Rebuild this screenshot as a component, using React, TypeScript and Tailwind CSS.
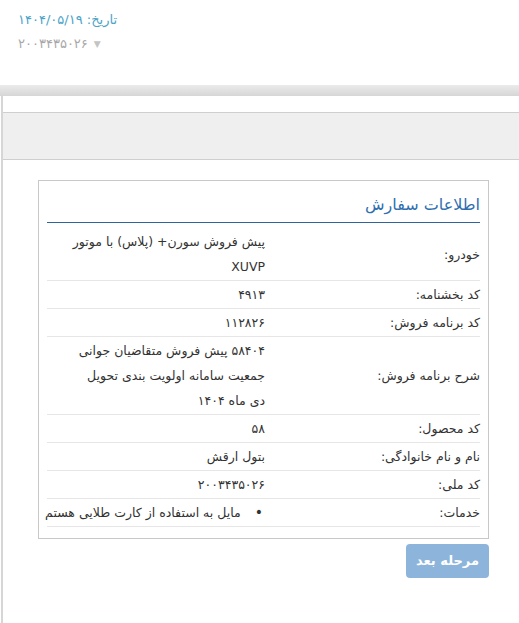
import React from 'react';

const rows: { label: string; lines: string[] }[] = [
  { label: 'خودرو:', lines: ['پیش فروش سورن+ (پلاس) با موتور', 'XUVP'] },
  { label: 'کد بخشنامه:', lines: ['۴۹۱۳'] },
  { label: 'کد برنامه فروش:', lines: ['۱۱۲۸۲۶'] },
  { label: 'شرح برنامه فروش:', lines: ['۵۸۴۰۴ پیش فروش متقاضیان جوانی', 'جمعیت سامانه اولویت بندی تحویل', 'دی ماه ۱۴۰۴'] },
  { label: 'کد محصول:', lines: ['۵۸'] },
  { label: 'نام و نام خانوادگی:', lines: ['بتول ارقش'] },
  { label: 'کد ملی:', lines: ['۲۰۰۳۴۳۵۰۲۶'] },
];

export default function App() {
  return (
    <div className="flex min-h-[623px] flex-col bg-white font-['DejaVu_Sans',sans-serif] text-[#333]">
      {/* header info */}
      <div className="h-[85px] shrink-0 px-[18px] pt-[8px]">
        <div dir="rtl" className="w-fit text-[13px] leading-[24px] text-[#4ba3c7]">
          تاریخ: ۱۴۰۴/۰۵/۱۹
        </div>
        <div dir="rtl" className="flex w-fit items-center gap-[6px] text-[13px] leading-[24px] text-[#a8a8a8]">
          <span className="text-[9px] text-[#c4c4c4]">▼</span>
          <span>۲۰۰۳۴۳۵۰۲۶</span>
        </div>
      </div>

      <div className="h-[11px] shrink-0 bg-gradient-to-b from-[#ebebeb] to-[#d6d6d6]" />

      <div className="ml-[1px] flex-1 border-l-[2px] border-[#d6d6d6]">
        <div className="h-[16px]" />
        <div className="h-[48px] border-y border-[#cfcfcf] bg-[#efefef]" />

        <div className="pl-[35px] pr-[30px] pt-[20px]">
          <div dir="rtl" className="border border-[#c8c8c8] px-[8px] pb-[11px] pt-[13px]">
            <div className="border-b border-[#2f639b] pb-[6px] text-[16px] leading-[22px] text-[#2f6fb0]">
              اطلاعات سفارش
            </div>
            <div className="mt-[5px]">
              {rows.map((r) => (
                <div key={r.label} className="flex items-center border-b border-[#e6e6e6] py-[1px] text-[12.5px]">
                  <div className="w-[215px] shrink-0 leading-[25px]">{r.label}</div>
                  <div className="flex-1 pl-[4px] leading-[25px]">
                    {r.lines.map((l) => (
                      <div key={l}>{l}</div>
                    ))}
                  </div>
                </div>
              ))}
              <div className="flex items-center border-b border-[#e6e6e6] py-[1px] text-[12.5px]">
                <div className="w-[215px] shrink-0 leading-[25px]">خدمات:</div>
                <div className="flex flex-1 items-center leading-[25px]">
                  <span className="pr-[2px] pl-[14px] text-[14px]">•</span>
                  <span className="whitespace-nowrap">مایل به استفاده از کارت طلایی هستم</span>
                </div>
              </div>
            </div>
          </div>

          <div dir="rtl" className="pt-[5px]">
            <button className="h-[34px] w-[83px] rounded-[4px] bg-[#8db4da] text-[13px] font-bold text-white">
              مرحله بعد
            </button>
          </div>
        </div>
      </div>
    </div>
  );
}
